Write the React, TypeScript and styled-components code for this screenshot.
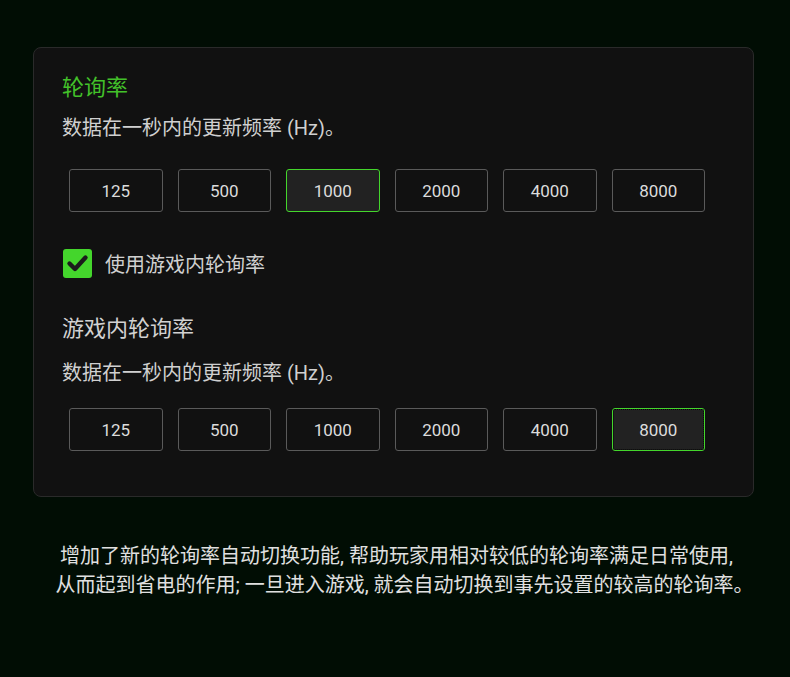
import { FC } from "react";
import styled, { createGlobalStyle } from "styled-components";

const rates = [125, 500, 1000, 2000, 4000, 8000];

const GlobalStyle = createGlobalStyle`
	body {
		margin: 0;
		background: #010d04;
		font-family: Roboto, "Noto Sans CJK SC", sans-serif;
	}
`;

interface IRateRowProps {
	selected: number;
	focused?: boolean;
	top: number;
}

const RateRow: FC<IRateRowProps> = ({ selected, focused, top }) => (
	<ButtonRow $top={top}>
		{rates.map((rate) => (
			<RateButton key={rate} $active={rate === selected} $focused={focused && rate === selected}>
				{rate}
			</RateButton>
		))}
	</ButtonRow>
);

const App: FC = () => {
	return (
		<Page>
			<GlobalStyle />
			<Card>
				<Title>轮询率</Title>
				<Description $top={11}>数据在一秒内的更新频率 (Hz)。</Description>
				<RateRow selected={1000} top={27} />
				<CheckRow>
					<CheckBox>
						<svg width="29" height="29" viewBox="0 0 29 29">
							<path d="M6.5 14.5 L12 20 L22.5 8.5" fill="none" stroke="#1c1c1c" strokeWidth="4.4" strokeLinecap="round" strokeLinejoin="round" />
						</svg>
					</CheckBox>
					<CheckLabel>使用游戏内轮询率</CheckLabel>
				</CheckRow>
				<SubTitle>游戏内轮询率</SubTitle>
				<Description $top={15}>数据在一秒内的更新频率 (Hz)。</Description>
				<RateRow selected={8000} focused top={21} />
			</Card>
			<Note>
				<NoteLine $shift={0}>增加了新的轮询率自动切换功能, 帮助玩家用相对较低的轮询率满足日常使用,</NoteLine>
				<NoteLine $shift={8}>从而起到省电的作用; 一旦进入游戏, 就会自动切换到事先设置的较高的轮询率。</NoteLine>
			</Note>
		</Page>
	);
};

export default App;

const Page = styled.div`
	width: 790px;
	height: 677px;
	padding-top: 47px;
	box-sizing: border-box;
`;

const Card = styled.div`
	margin-left: 33px;
	width: 721px;
	height: 450px;
	box-sizing: border-box;
	background: #111111;
	border: 1px solid #2a2a2a;
	border-radius: 8px;
	padding: 25px 0 0 28px;
`;

const Title = styled.div`
	font-size: 22px;
	line-height: 30px;
	color: #43c12a;
`;

const SubTitle = styled.div`
	font-size: 22px;
	line-height: 30px;
	color: #d2d2d2;
	margin-top: 36px;
`;

const Description = styled.div<{ $top: number }>`
	font-size: 20px;
	line-height: 28px;
	color: #d0d0d0;
	margin-top: ${({ $top }) => $top}px;
`;

const ButtonRow = styled.div<{ $top: number }>`
	display: flex;
	gap: 15px;
	margin: ${({ $top }) => $top}px 0 0 7px;
`;

const RateButton = styled.div<{ $active?: boolean; $focused?: boolean }>`
	width: 93.5px;
	height: 43px;
	box-sizing: border-box;
	display: flex;
	align-items: center;
	justify-content: center;
	border: 1px solid ${({ $active }) => ($active ? "#44d62c" : "#5a5a5a")};
	border-radius: 3px;
	background: ${({ $active }) => ($active ? "#222222" : "#111111")};
	color: #dcdcdc;
	font-size: 17px;
	outline: ${({ $focused }) => ($focused ? "1px dotted #050505" : "none")};
	outline-offset: -2px;
`;

const CheckRow = styled.div`
	display: flex;
	align-items: center;
	gap: 13px;
	margin: 37px 0 0 1px;
`;

const CheckBox = styled.div`
	width: 29px;
	height: 29px;
	border-radius: 3px;
	background: #44d62c;
	display: flex;
`;

const CheckLabel = styled.span`
	font-size: 20px;
	color: #d0d0d0;
`;

const Note = styled.div`
	margin-top: 45px;
	padding-left: 3px;
	text-align: center;
	color: #e0e0e0;
	font-size: 20px;
	line-height: 29px;
`;

const NoteLine = styled.p<{ $shift: number }>`
	margin: 0;
	padding-left: ${({ $shift }) => $shift * 2}px;
`;
